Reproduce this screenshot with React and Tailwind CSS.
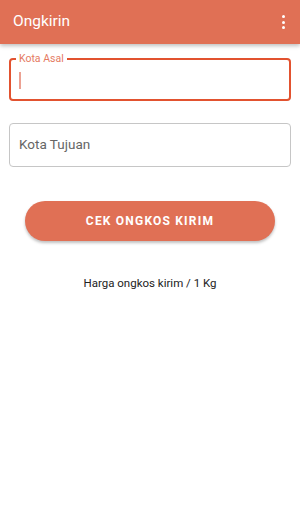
import React from 'react';

const App = () => {
  return (
    <div className="w-[300px] h-[510px] bg-white font-['Roboto',sans-serif] overflow-hidden">
      <div className="h-[44px] bg-[#e07055] flex items-center justify-between pl-[13px] pr-[15px] shadow-[0_2px_4px_rgba(0,0,0,0.25)]">
        <span className="text-white text-[15.5px] leading-none">Ongkirin</span>
        <div className="flex flex-col gap-[2.5px]">
          <span className="w-[3px] h-[3px] bg-white rounded-full" />
          <span className="w-[3px] h-[3px] bg-white rounded-full" />
          <span className="w-[3px] h-[3px] bg-white rounded-full" />
        </div>
      </div>

      <div className="px-[9px] pt-[14px]">
        <div className="relative h-[43px] border-2 border-[#e2522f] rounded-[4px] flex items-center pl-[8px]">
          <span className="absolute -top-[7px] left-[5px] px-[3px] bg-white text-[10.5px] leading-[12px] text-[#e57a62]">Kota Asal</span>
          <span className="w-[1.5px] h-[17px] bg-[#eca192] mt-[2px]" />
        </div>

        <div className="mt-[22px] h-[44px] border border-[#c6c6c6] rounded-[4px] flex items-center pl-[9px]">
          <span className="text-[13.5px] leading-none text-[#666]">Kota Tujuan</span>
        </div>
      </div>

      <div className="px-[25px] mt-[34px]">
        <button className="w-full h-[40px] rounded-full bg-[#e07055] text-white text-[12px] font-bold tracking-[1.2px] shadow-[0_2px_3px_rgba(0,0,0,0.25)]">
          CEK ONGKOS KIRIM
        </button>
      </div>

      <p className="mt-[34px] text-center text-[11.5px] text-[#222]">Harga ongkos kirim / 1 Kg</p>
    </div>
  );
};

export default App;
